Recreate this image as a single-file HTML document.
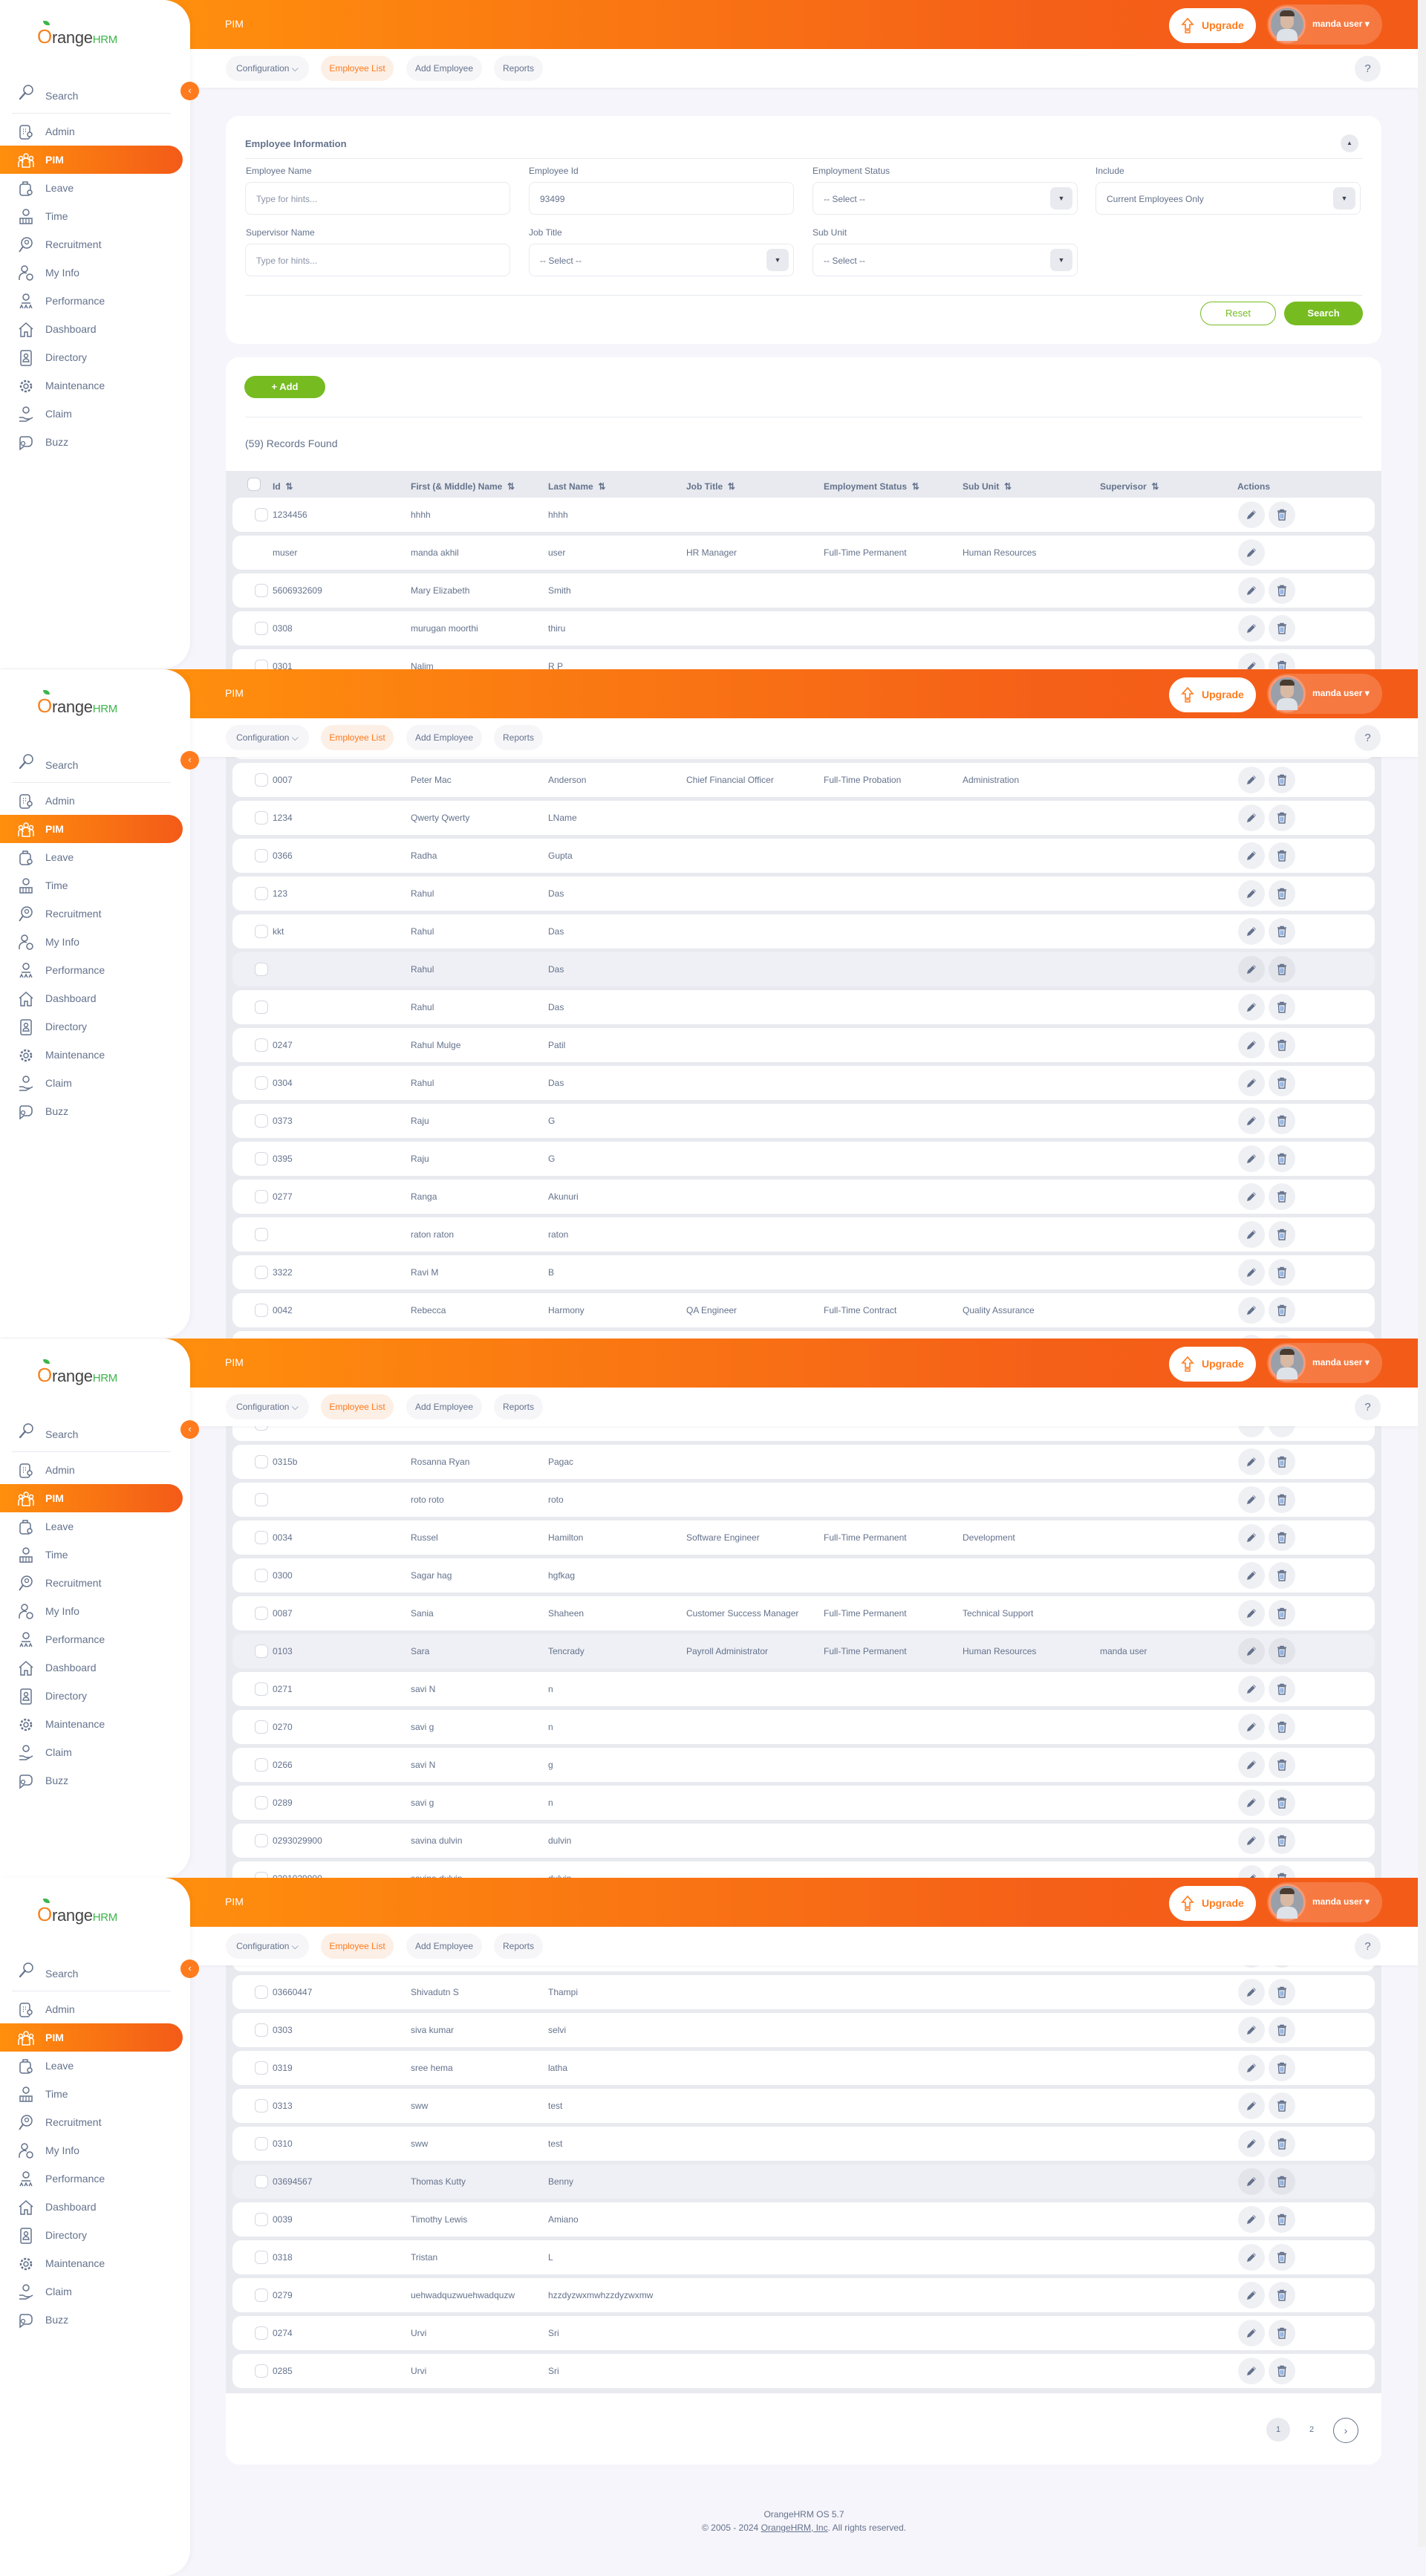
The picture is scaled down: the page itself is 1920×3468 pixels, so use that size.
<!DOCTYPE html>
<html><head><meta charset="utf-8">
<style>
*{box-sizing:border-box;margin:0;padding:0}
body{width:1920px;height:3429px;position:relative;overflow:hidden;background:#f6f5fb;font-family:"Liberation Sans",sans-serif;color:#64728c}
.abs{position:absolute}
.card{position:absolute;left:304px;width:1556px;background:#fff;border-radius:18px}
.lbl{position:absolute;font-size:12px;color:#64728c}
.inp{position:absolute;height:44px;width:357px;border:1px solid #e8eaef;border-radius:8px;font-size:12px;color:#8a93a6;padding:15px 14px;background:#fff}
.inp.dark{color:#64728c}
.car{position:absolute;right:6px;top:6px;width:30px;height:30px;background:#e8eaef;border-radius:7px;font-size:9px;text-align:center;line-height:30px;color:#3a4455}
.tgrey{position:absolute;left:304px;width:1556px;background:#e8eaef}
.row{position:absolute;left:313px;width:1538px;height:46px;background:#fff;border-radius:12px;font-size:12px;color:#64728c}
.row.hl{background:#eff0f5}
.row span{position:absolute;top:16px;white-space:nowrap}
.cb{position:absolute;left:30px;top:14px;width:18px;height:18px;border:1px solid #d5d8df;border-radius:6px;background:#fff}
.ed,.dl{position:absolute;top:5px;width:36px;height:36px;border-radius:18px;background:#eff0f4}
.row.hl .ed,.row.hl .dl{background:#e2e4ea}
.ed{left:1354px}.dl{left:1395px}
.ed svg,.dl svg{position:absolute;left:9px;top:9px}
.frame{position:absolute;left:0;width:1920px;height:0;z-index:10}
.side{position:absolute;left:0;top:0;width:256px;background:#fff;border-radius:0 36px 36px 0;box-shadow:2px 0 8px rgba(0,0,0,.04);z-index:3}
.hdr{position:absolute;left:220px;top:0;width:1689px;height:66px;background:linear-gradient(90deg,#ff8f0d,#f56018 70%,#f35b18);z-index:2}
.sub{position:absolute;left:256px;top:66px;width:1653px;height:52px;background:#fff;box-shadow:0 2px 3px rgba(0,0,0,.03);z-index:2}
.tab{position:absolute;top:9px;height:34px;border-radius:17px;background:#f6f6f9;font-size:12px;color:#64728c;line-height:34px;text-align:center}
.mi{position:absolute;left:0;width:246px;height:38px;font-size:14px;color:#64728c}
.mi svg{position:absolute;left:23px;top:8px}
.mi b{position:absolute;left:61px;top:11px;font-weight:normal}
.mi.act{background:linear-gradient(90deg,#ff8f0d,#f35b18);border-radius:0 19px 19px 0;color:#fff}
.mi.act b{font-weight:bold}
.th{position:absolute;top:648px;font-size:12px;font-weight:bold;color:#64728c;white-space:nowrap}
.scroll{position:absolute;left:1909px;top:0;width:11px;height:3429px;background:#f1f1f1;z-index:20}
.logo{position:absolute;left:50px;top:34px;font-size:22px;color:#444;letter-spacing:-0.3px}
.logo i{font-style:normal;color:#f58220;font-size:26px}
.logo em{font-style:normal;color:#3cb54a;font-size:15px}
.leaf{position:absolute;left:58px;top:28px;width:9px;height:6px;background:#3cb54a;border-radius:0 8px 0 8px}
</style></head><body>

<div class="scroll"></div>

<div class="card" style="top:156px;height:307px">
  <div class="abs" style="left:26px;top:30px;font-size:13px;font-weight:bold;color:#64728c">Employee Information</div>
  <div class="abs" style="left:1501px;top:25px;width:24px;height:24px;border-radius:12px;background:#e8eaef;font-size:8px;text-align:center;line-height:24px;color:#3a4455">▲</div>
  <div class="abs" style="left:26px;top:57px;width:1504px;height:1px;background:#e8eaef"></div>
  <div class="abs" style="left:26px;top:241px;width:1504px;height:1px;background:#e8eaef"></div>
</div>
<div class="lbl" style="left:331px;top:223px">Employee Name</div>
<div class="lbl" style="left:712px;top:223px">Employee Id</div>
<div class="lbl" style="left:1094px;top:223px">Employment Status</div>
<div class="lbl" style="left:1475px;top:223px">Include</div>
<div class="inp" style="left:330px;top:245px">Type for hints...</div>
<div class="inp dark" style="left:712px;top:245px">93499</div>
<div class="inp dark" style="left:1094px;top:245px">-- Select --<div class="car">▼</div></div>
<div class="inp dark" style="left:1475px;top:245px">Current Employees Only<div class="car">▼</div></div>
<div class="lbl" style="left:331px;top:306px">Supervisor Name</div>
<div class="lbl" style="left:712px;top:306px">Job Title</div>
<div class="lbl" style="left:1094px;top:306px">Sub Unit</div>
<div class="inp" style="left:330px;top:328px">Type for hints...</div>
<div class="inp dark" style="left:712px;top:328px">-- Select --<div class="car">▼</div></div>
<div class="inp dark" style="left:1094px;top:328px">-- Select --<div class="car">▼</div></div>
<div class="abs" style="left:1616px;top:406px;width:102px;height:32px;border:1px solid #76bc21;border-radius:16px;color:#76bc21;font-size:13px;text-align:center;line-height:30px">Reset</div>
<div class="abs" style="left:1729px;top:406px;width:106px;height:32px;background:#76bc21;border-radius:16px;color:#fff;font-size:13px;font-weight:bold;text-align:center;line-height:32px">Search</div>

<div class="card" style="top:481px;height:2837px"></div>
<div class="abs" style="left:329px;top:506px;width:109px;height:30px;background:#76bc21;border-radius:15px;color:#fff;font-size:13px;font-weight:bold;text-align:center;line-height:30px">+ Add</div>
<div class="abs" style="left:330px;top:561px;width:1504px;height:1px;background:#e8eaef"></div>
<div class="abs" style="left:330px;top:589px;font-size:14px;color:#64728c">(59) Records Found</div>
<div class="tgrey" style="top:634px;height:2588px"></div>
<div class="abs" style="left:333px;top:643px;width:18px;height:18px;border:1px solid #c9ced8;border-radius:6px;background:#fff"></div>
<div class="th" style="left:367px">Id &nbsp;⇅</div>
<div class="th" style="left:553px">First (&amp; Middle) Name &nbsp;⇅</div>
<div class="th" style="left:738px">Last Name &nbsp;⇅</div>
<div class="th" style="left:924px">Job Title &nbsp;⇅</div>
<div class="th" style="left:1109px">Employment Status &nbsp;⇅</div>
<div class="th" style="left:1296px">Sub Unit &nbsp;⇅</div>
<div class="th" style="left:1481px">Supervisor &nbsp;⇅</div>
<div class="th" style="left:1666px">Actions</div>

<svg width="0" height="0" style="position:absolute"><defs>
<symbol id="pen" viewBox="0 0 18 18"><path d="M3 15 L4 11 L12 3 L15 6 L7 14 Z" fill="#64728c"/><path d="M11 4 L14 7" stroke="#eff0f4" stroke-width="1"/></symbol>
<symbol id="bin" viewBox="0 0 18 18"><path d="M3 4 H15 M7 4 V2.5 H11 V4" stroke="#64728c" stroke-width="1.6" fill="none"/><path d="M4.5 5.5 H13.5 L12.8 16 H5.2 Z" fill="none" stroke="#64728c" stroke-width="1.5"/><path d="M7.5 7.5 V14 M9 7.5 V14 M10.5 7.5 V14" stroke="#5b8fd6" stroke-width="0.9"/></symbol>
<symbol id="i-s" viewBox="0 0 24 24"><circle cx="14" cy="9" r="6" fill="none" stroke="#64728c" stroke-width="1.5"/><path d="M10 13 L3 21" stroke="#64728c" stroke-width="2.2" stroke-linecap="round"/></symbol>
<symbol id="i-g" viewBox="0 0 24 24"><rect x="4" y="3" width="13" height="18" rx="3" fill="none" stroke="#64728c" stroke-width="1.5"/><circle cx="17" cy="15" r="3" fill="#fff" stroke="#64728c" stroke-width="1.5"/><path d="M8 8h1M11 8h1M8 11h1M11 11h1M8 14h1" stroke="#64728c" stroke-width="1.5"/></symbol>
<symbol id="i-p" viewBox="0 0 24 24"><circle cx="12" cy="6" r="3" fill="none" stroke="#fff" stroke-width="1.5"/><circle cx="5" cy="9" r="2.5" fill="none" stroke="#fff" stroke-width="1.5"/><circle cx="19" cy="9" r="2.5" fill="none" stroke="#fff" stroke-width="1.5"/><path d="M2 21v-6a3 3 0 0 1 6 0M16 15a3 3 0 0 1 6 0v6M7 21v-7a5 5 0 0 1 10 0v7z" fill="none" stroke="#fff" stroke-width="1.5"/></symbol>
<symbol id="i-x" viewBox="0 0 24 24"><rect x="4" y="6" width="14" height="15" rx="3" fill="none" stroke="#64728c" stroke-width="1.5"/><path d="M8 6V3h6v3" fill="none" stroke="#64728c" stroke-width="1.5"/><circle cx="17" cy="17" r="3" fill="#fff" stroke="#64728c" stroke-width="1.5"/></symbol>
<symbol id="i-t" viewBox="0 0 24 24"><circle cx="12" cy="6" r="4" fill="none" stroke="#64728c" stroke-width="1.5"/><rect x="4" y="14" width="16" height="7" fill="none" stroke="#64728c" stroke-width="1.5"/><path d="M8 14v7M12 14v7M16 14v7" stroke="#64728c" stroke-width="1.2"/></symbol>
<symbol id="i-r" viewBox="0 0 24 24"><circle cx="13" cy="9" r="7" fill="none" stroke="#64728c" stroke-width="1.5"/><circle cx="13" cy="8" r="2.5" fill="none" stroke="#64728c" stroke-width="1.3"/><path d="M8 14L3 21" stroke="#64728c" stroke-width="1.8"/></symbol>
<symbol id="i-m" viewBox="0 0 24 24"><circle cx="10" cy="6" r="4" fill="none" stroke="#64728c" stroke-width="1.5"/><path d="M3 21v-3a7 7 0 0 1 10-6" fill="none" stroke="#64728c" stroke-width="1.5"/><circle cx="17" cy="17" r="4" fill="none" stroke="#64728c" stroke-width="1.5"/></symbol>
<symbol id="i-f" viewBox="0 0 24 24"><circle cx="12" cy="6" r="4" fill="none" stroke="#64728c" stroke-width="1.5"/><path d="M6 14h12M4 21l2-4 2 4M10 21l2-4 2 4M16 21l2-4 2 4" fill="none" stroke="#64728c" stroke-width="1.4"/></symbol>
<symbol id="i-d" viewBox="0 0 24 24"><path d="M3 11L12 3l9 8M5 10v11h5v-6h4v6h5V10" fill="none" stroke="#64728c" stroke-width="1.5"/></symbol>
<symbol id="i-y" viewBox="0 0 24 24"><rect x="5" y="2" width="14" height="20" rx="2" fill="none" stroke="#64728c" stroke-width="1.5"/><circle cx="12" cy="9" r="2.5" fill="none" stroke="#64728c" stroke-width="1.4"/><path d="M8 17a4 4 0 0 1 8 0z" fill="none" stroke="#64728c" stroke-width="1.4"/></symbol>
<symbol id="i-n" viewBox="0 0 24 24"><circle cx="12" cy="12" r="7" fill="none" stroke="#64728c" stroke-width="2.5" stroke-dasharray="3 2"/><circle cx="12" cy="12" r="3" fill="none" stroke="#64728c" stroke-width="1.5"/></symbol>
<symbol id="i-c" viewBox="0 0 24 24"><circle cx="12" cy="6" r="4" fill="none" stroke="#64728c" stroke-width="1.5"/><path d="M3 16h5l4 2h6M3 21h9l9-5" fill="none" stroke="#64728c" stroke-width="1.5"/></symbol>
<symbol id="i-b" viewBox="0 0 24 24"><path d="M6 4h9a5 5 0 0 1 5 5v3a5 5 0 0 1-5 5H9l-5 4V7a3 3 0 0 1 2-3z" fill="none" stroke="#64728c" stroke-width="1.5"/><circle cx="8" cy="13" r="2.5" fill="none" stroke="#64728c" stroke-width="1.3"/></symbol>
<symbol id="up" viewBox="0 0 18 24"><path d="M9 2L2 10h4v6h6v-6h4z" fill="none" stroke="#ff7b1d" stroke-width="1.6"/><rect x="6" y="18" width="6" height="3" fill="none" stroke="#ff7b1d" stroke-width="1.4"/></symbol>
</defs></svg>

<div class="row" style="top:670px"><i class="cb"></i><span style="left:54px">1234456</span><span style="left:240px">hhhh</span><span style="left:425px">hhhh</span><i class="ed"><svg width="18" height="18"><use href="#pen"/></svg></i><i class="dl"><svg width="18" height="18"><use href="#bin"/></svg></i></div>
<div class="row" style="top:721px"><span style="left:54px">muser</span><span style="left:240px">manda akhil</span><span style="left:425px">user</span><span style="left:611px">HR Manager</span><span style="left:796px">Full-Time Permanent</span><span style="left:983px">Human Resources</span><i class="ed"><svg width="18" height="18"><use href="#pen"/></svg></i></div>
<div class="row" style="top:772px"><i class="cb"></i><span style="left:54px">5606932609</span><span style="left:240px">Mary Elizabeth</span><span style="left:425px">Smith</span><i class="ed"><svg width="18" height="18"><use href="#pen"/></svg></i><i class="dl"><svg width="18" height="18"><use href="#bin"/></svg></i></div>
<div class="row" style="top:823px"><i class="cb"></i><span style="left:54px">0308</span><span style="left:240px">murugan moorthi</span><span style="left:425px">thiru</span><i class="ed"><svg width="18" height="18"><use href="#pen"/></svg></i><i class="dl"><svg width="18" height="18"><use href="#bin"/></svg></i></div>
<div class="row" style="top:874px"><i class="cb"></i><span style="left:54px">0301</span><span style="left:240px">Nalim</span><span style="left:425px">R P</span><i class="ed"><svg width="18" height="18"><use href="#pen"/></svg></i><i class="dl"><svg width="18" height="18"><use href="#bin"/></svg></i></div>

<div class="row" style="top:976px"><i class="cb"></i></div>
<div class="row" style="top:1027px"><i class="cb"></i><span style="left:54px">0007</span><span style="left:240px">Peter Mac</span><span style="left:425px">Anderson</span><span style="left:611px">Chief Financial Officer</span><span style="left:796px">Full-Time Probation</span><span style="left:983px">Administration</span><i class="ed"><svg width="18" height="18"><use href="#pen"/></svg></i><i class="dl"><svg width="18" height="18"><use href="#bin"/></svg></i></div>
<div class="row" style="top:1078px"><i class="cb"></i><span style="left:54px">1234</span><span style="left:240px">Qwerty Qwerty</span><span style="left:425px">LName</span><i class="ed"><svg width="18" height="18"><use href="#pen"/></svg></i><i class="dl"><svg width="18" height="18"><use href="#bin"/></svg></i></div>
<div class="row" style="top:1129px"><i class="cb"></i><span style="left:54px">0366</span><span style="left:240px">Radha</span><span style="left:425px">Gupta</span><i class="ed"><svg width="18" height="18"><use href="#pen"/></svg></i><i class="dl"><svg width="18" height="18"><use href="#bin"/></svg></i></div>
<div class="row" style="top:1180px"><i class="cb"></i><span style="left:54px">123</span><span style="left:240px">Rahul</span><span style="left:425px">Das</span><i class="ed"><svg width="18" height="18"><use href="#pen"/></svg></i><i class="dl"><svg width="18" height="18"><use href="#bin"/></svg></i></div>
<div class="row" style="top:1231px"><i class="cb"></i><span style="left:54px">kkt</span><span style="left:240px">Rahul</span><span style="left:425px">Das</span><i class="ed"><svg width="18" height="18"><use href="#pen"/></svg></i><i class="dl"><svg width="18" height="18"><use href="#bin"/></svg></i></div>
<div class="row hl" style="top:1282px"><i class="cb"></i><span style="left:240px">Rahul</span><span style="left:425px">Das</span><i class="ed"><svg width="18" height="18"><use href="#pen"/></svg></i><i class="dl"><svg width="18" height="18"><use href="#bin"/></svg></i></div>
<div class="row" style="top:1333px"><i class="cb"></i><span style="left:240px">Rahul</span><span style="left:425px">Das</span><i class="ed"><svg width="18" height="18"><use href="#pen"/></svg></i><i class="dl"><svg width="18" height="18"><use href="#bin"/></svg></i></div>
<div class="row" style="top:1384px"><i class="cb"></i><span style="left:54px">0247</span><span style="left:240px">Rahul Mulge</span><span style="left:425px">Patil</span><i class="ed"><svg width="18" height="18"><use href="#pen"/></svg></i><i class="dl"><svg width="18" height="18"><use href="#bin"/></svg></i></div>
<div class="row" style="top:1435px"><i class="cb"></i><span style="left:54px">0304</span><span style="left:240px">Rahul</span><span style="left:425px">Das</span><i class="ed"><svg width="18" height="18"><use href="#pen"/></svg></i><i class="dl"><svg width="18" height="18"><use href="#bin"/></svg></i></div>
<div class="row" style="top:1486px"><i class="cb"></i><span style="left:54px">0373</span><span style="left:240px">Raju</span><span style="left:425px">G</span><i class="ed"><svg width="18" height="18"><use href="#pen"/></svg></i><i class="dl"><svg width="18" height="18"><use href="#bin"/></svg></i></div>
<div class="row" style="top:1537px"><i class="cb"></i><span style="left:54px">0395</span><span style="left:240px">Raju</span><span style="left:425px">G</span><i class="ed"><svg width="18" height="18"><use href="#pen"/></svg></i><i class="dl"><svg width="18" height="18"><use href="#bin"/></svg></i></div>
<div class="row" style="top:1588px"><i class="cb"></i><span style="left:54px">0277</span><span style="left:240px">Ranga</span><span style="left:425px">Akunuri</span><i class="ed"><svg width="18" height="18"><use href="#pen"/></svg></i><i class="dl"><svg width="18" height="18"><use href="#bin"/></svg></i></div>
<div class="row" style="top:1639px"><i class="cb"></i><span style="left:240px">raton raton</span><span style="left:425px">raton</span><i class="ed"><svg width="18" height="18"><use href="#pen"/></svg></i><i class="dl"><svg width="18" height="18"><use href="#bin"/></svg></i></div>
<div class="row" style="top:1690px"><i class="cb"></i><span style="left:54px">3322</span><span style="left:240px">Ravi M</span><span style="left:425px">B</span><i class="ed"><svg width="18" height="18"><use href="#pen"/></svg></i><i class="dl"><svg width="18" height="18"><use href="#bin"/></svg></i></div>
<div class="row" style="top:1741px"><i class="cb"></i><span style="left:54px">0042</span><span style="left:240px">Rebecca</span><span style="left:425px">Harmony</span><span style="left:611px">QA Engineer</span><span style="left:796px">Full-Time Contract</span><span style="left:983px">Quality Assurance</span><i class="ed"><svg width="18" height="18"><use href="#pen"/></svg></i><i class="dl"><svg width="18" height="18"><use href="#bin"/></svg></i></div>
<div class="row" style="top:1792px"><i class="cb"></i><i class="ed"></i><i class="dl"></i></div>

<div class="row" style="top:1894px"><i class="cb"></i><i class="ed"></i><i class="dl"></i></div>
<div class="row" style="top:1945px"><i class="cb"></i><span style="left:54px">0315b</span><span style="left:240px">Rosanna Ryan</span><span style="left:425px">Pagac</span><i class="ed"><svg width="18" height="18"><use href="#pen"/></svg></i><i class="dl"><svg width="18" height="18"><use href="#bin"/></svg></i></div>
<div class="row" style="top:1996px"><i class="cb"></i><span style="left:240px">roto roto</span><span style="left:425px">roto</span><i class="ed"><svg width="18" height="18"><use href="#pen"/></svg></i><i class="dl"><svg width="18" height="18"><use href="#bin"/></svg></i></div>
<div class="row" style="top:2047px"><i class="cb"></i><span style="left:54px">0034</span><span style="left:240px">Russel</span><span style="left:425px">Hamilton</span><span style="left:611px">Software Engineer</span><span style="left:796px">Full-Time Permanent</span><span style="left:983px">Development</span><i class="ed"><svg width="18" height="18"><use href="#pen"/></svg></i><i class="dl"><svg width="18" height="18"><use href="#bin"/></svg></i></div>
<div class="row" style="top:2098px"><i class="cb"></i><span style="left:54px">0300</span><span style="left:240px">Sagar hag</span><span style="left:425px">hgfkag</span><i class="ed"><svg width="18" height="18"><use href="#pen"/></svg></i><i class="dl"><svg width="18" height="18"><use href="#bin"/></svg></i></div>
<div class="row" style="top:2149px"><i class="cb"></i><span style="left:54px">0087</span><span style="left:240px">Sania</span><span style="left:425px">Shaheen</span><span style="left:611px">Customer Success Manager</span><span style="left:796px">Full-Time Permanent</span><span style="left:983px">Technical Support</span><i class="ed"><svg width="18" height="18"><use href="#pen"/></svg></i><i class="dl"><svg width="18" height="18"><use href="#bin"/></svg></i></div>
<div class="row hl" style="top:2200px"><i class="cb"></i><span style="left:54px">0103</span><span style="left:240px">Sara</span><span style="left:425px">Tencrady</span><span style="left:611px">Payroll Administrator</span><span style="left:796px">Full-Time Permanent</span><span style="left:983px">Human Resources</span><span style="left:1168px">manda user</span><i class="ed"><svg width="18" height="18"><use href="#pen"/></svg></i><i class="dl"><svg width="18" height="18"><use href="#bin"/></svg></i></div>
<div class="row" style="top:2251px"><i class="cb"></i><span style="left:54px">0271</span><span style="left:240px">savi N</span><span style="left:425px">n</span><i class="ed"><svg width="18" height="18"><use href="#pen"/></svg></i><i class="dl"><svg width="18" height="18"><use href="#bin"/></svg></i></div>
<div class="row" style="top:2302px"><i class="cb"></i><span style="left:54px">0270</span><span style="left:240px">savi g</span><span style="left:425px">n</span><i class="ed"><svg width="18" height="18"><use href="#pen"/></svg></i><i class="dl"><svg width="18" height="18"><use href="#bin"/></svg></i></div>
<div class="row" style="top:2353px"><i class="cb"></i><span style="left:54px">0266</span><span style="left:240px">savi N</span><span style="left:425px">g</span><i class="ed"><svg width="18" height="18"><use href="#pen"/></svg></i><i class="dl"><svg width="18" height="18"><use href="#bin"/></svg></i></div>
<div class="row" style="top:2404px"><i class="cb"></i><span style="left:54px">0289</span><span style="left:240px">savi g</span><span style="left:425px">n</span><i class="ed"><svg width="18" height="18"><use href="#pen"/></svg></i><i class="dl"><svg width="18" height="18"><use href="#bin"/></svg></i></div>
<div class="row" style="top:2455px"><i class="cb"></i><span style="left:54px">0293029900</span><span style="left:240px">savina dulvin</span><span style="left:425px">dulvin</span><i class="ed"><svg width="18" height="18"><use href="#pen"/></svg></i><i class="dl"><svg width="18" height="18"><use href="#bin"/></svg></i></div>
<div class="row" style="top:2506px"><i class="cb"></i><span style="left:54px">0291029900</span><span style="left:240px">savina dulvin</span><span style="left:425px">dulvin</span><i class="ed"><svg width="18" height="18"><use href="#pen"/></svg></i><i class="dl"><svg width="18" height="18"><use href="#bin"/></svg></i></div>

<div class="row" style="top:2608px"><i class="cb"></i><i class="ed"></i><i class="dl"></i></div>
<div class="row" style="top:2659px"><i class="cb"></i><span style="left:54px">03660447</span><span style="left:240px">Shivadutn S</span><span style="left:425px">Thampi</span><i class="ed"><svg width="18" height="18"><use href="#pen"/></svg></i><i class="dl"><svg width="18" height="18"><use href="#bin"/></svg></i></div>
<div class="row" style="top:2710px"><i class="cb"></i><span style="left:54px">0303</span><span style="left:240px">siva kumar</span><span style="left:425px">selvi</span><i class="ed"><svg width="18" height="18"><use href="#pen"/></svg></i><i class="dl"><svg width="18" height="18"><use href="#bin"/></svg></i></div>
<div class="row" style="top:2761px"><i class="cb"></i><span style="left:54px">0319</span><span style="left:240px">sree hema</span><span style="left:425px">latha</span><i class="ed"><svg width="18" height="18"><use href="#pen"/></svg></i><i class="dl"><svg width="18" height="18"><use href="#bin"/></svg></i></div>
<div class="row" style="top:2812px"><i class="cb"></i><span style="left:54px">0313</span><span style="left:240px">sww</span><span style="left:425px">test</span><i class="ed"><svg width="18" height="18"><use href="#pen"/></svg></i><i class="dl"><svg width="18" height="18"><use href="#bin"/></svg></i></div>
<div class="row" style="top:2863px"><i class="cb"></i><span style="left:54px">0310</span><span style="left:240px">sww</span><span style="left:425px">test</span><i class="ed"><svg width="18" height="18"><use href="#pen"/></svg></i><i class="dl"><svg width="18" height="18"><use href="#bin"/></svg></i></div>
<div class="row hl" style="top:2914px"><i class="cb"></i><span style="left:54px">03694567</span><span style="left:240px">Thomas Kutty</span><span style="left:425px">Benny</span><i class="ed"><svg width="18" height="18"><use href="#pen"/></svg></i><i class="dl"><svg width="18" height="18"><use href="#bin"/></svg></i></div>
<div class="row" style="top:2965px"><i class="cb"></i><span style="left:54px">0039</span><span style="left:240px">Timothy Lewis</span><span style="left:425px">Amiano</span><i class="ed"><svg width="18" height="18"><use href="#pen"/></svg></i><i class="dl"><svg width="18" height="18"><use href="#bin"/></svg></i></div>
<div class="row" style="top:3016px"><i class="cb"></i><span style="left:54px">0318</span><span style="left:240px">Tristan</span><span style="left:425px">L</span><i class="ed"><svg width="18" height="18"><use href="#pen"/></svg></i><i class="dl"><svg width="18" height="18"><use href="#bin"/></svg></i></div>
<div class="row" style="top:3067px"><i class="cb"></i><span style="left:54px">0279</span><span style="left:240px">uehwadquzwuehwadquzw</span><span style="left:425px">hzzdyzwxmwhzzdyzwxmw</span><i class="ed"><svg width="18" height="18"><use href="#pen"/></svg></i><i class="dl"><svg width="18" height="18"><use href="#bin"/></svg></i></div>
<div class="row" style="top:3118px"><i class="cb"></i><span style="left:54px">0274</span><span style="left:240px">Urvi</span><span style="left:425px">Sri</span><i class="ed"><svg width="18" height="18"><use href="#pen"/></svg></i><i class="dl"><svg width="18" height="18"><use href="#bin"/></svg></i></div>
<div class="row" style="top:3169px"><i class="cb"></i><span style="left:54px">0285</span><span style="left:240px">Urvi</span><span style="left:425px">Sri</span><i class="ed"><svg width="18" height="18"><use href="#pen"/></svg></i><i class="dl"><svg width="18" height="18"><use href="#bin"/></svg></i></div>

<div class="abs" style="left:1705px;top:3255px;width:32px;height:32px;border-radius:16px;background:#e8eaef;font-size:11px;text-align:center;line-height:32px">1</div>
<div class="abs" style="left:1750px;top:3255px;width:32px;height:32px;font-size:11px;text-align:center;line-height:32px">2</div>
<div class="abs" style="left:1795px;top:3255px;width:34px;height:34px;border-radius:17px;border:1px solid #64728c;font-size:14px;text-align:center;line-height:32px">›</div>

<div class="abs" style="left:256px;width:1653px;top:3376px;text-align:center;font-size:12px;line-height:18px;color:#64728c">OrangeHRM OS 5.7<br>© 2005 - 2024 <u>OrangeHRM, Inc</u>. All rights reserved.</div>

<!-- FRAME 1 -->
<div class="frame" style="top:0px">
 <div class="side" style="height:900px">
  <div class="leaf"></div><div class="logo"><i>O</i>range<em>HRM</em></div>
  <svg class="abs" style="left:24px;top:112px" width="24" height="24"><use href="#i-s"/></svg>
  <div class="abs" style="left:61px;top:121px;font-size:14px">Search</div>
  <div class="abs" style="left:16px;top:152px;width:214px;height:1px;background:#e8eaef"></div>
  <div class="mi" style="top:158px"><svg width="24" height="24"><use href="#i-g"/></svg><b>Admin</b></div>
  <div class="mi act" style="top:196px"><svg width="24" height="24"><use href="#i-p"/></svg><b>PIM</b></div>
  <div class="mi" style="top:234px"><svg width="24" height="24"><use href="#i-x"/></svg><b>Leave</b></div>
  <div class="mi" style="top:272px"><svg width="24" height="24"><use href="#i-t"/></svg><b>Time</b></div>
  <div class="mi" style="top:310px"><svg width="24" height="24"><use href="#i-r"/></svg><b>Recruitment</b></div>
  <div class="mi" style="top:348px"><svg width="24" height="24"><use href="#i-m"/></svg><b>My Info</b></div>
  <div class="mi" style="top:386px"><svg width="24" height="24"><use href="#i-f"/></svg><b>Performance</b></div>
  <div class="mi" style="top:424px"><svg width="24" height="24"><use href="#i-d"/></svg><b>Dashboard</b></div>
  <div class="mi" style="top:462px"><svg width="24" height="24"><use href="#i-y"/></svg><b>Directory</b></div>
  <div class="mi" style="top:500px"><svg width="24" height="24"><use href="#i-n"/></svg><b>Maintenance</b></div>
  <div class="mi" style="top:538px"><svg width="24" height="24"><use href="#i-c"/></svg><b>Claim</b></div>
  <div class="mi" style="top:576px"><svg width="24" height="24"><use href="#i-b"/></svg><b>Buzz</b></div>
 </div>
 <div class="abs" style="left:243px;top:110px;width:25px;height:25px;border-radius:13px;background:#ff7b1d;color:#fff;font-size:13px;text-align:center;line-height:24px;z-index:4">‹</div>
 <div class="hdr"><div class="abs" style="left:83px;top:24px;color:#fff;font-size:14px">PIM</div>
  <div class="abs" style="left:1354px;top:11px;width:117px;height:47px;background:#fff;border-radius:24px;color:#ff7b1d;font-weight:bold;font-size:14px;line-height:47px;padding-left:44px"><svg class="abs" style="left:16px;top:12px" width="18" height="24"><use href="#up"/></svg>Upgrade</div>
  <div class="abs" style="left:1486px;top:6px;width:155px;height:54px;background:rgba(255,255,255,.18);border-radius:27px"><div class="abs" style="left:2px;top:2px;width:50px;height:50px;border-radius:25px;background:#9aa0aa;border:3px solid #f49a78"><div class="abs" style="left:13px;top:6px;width:18px;height:22px;border-radius:9px;background:#d8b9a4"></div><div class="abs" style="left:8px;top:28px;width:28px;height:16px;border-radius:10px 10px 0 0;background:#dde2e8"></div><div class="abs" style="left:12px;top:3px;width:20px;height:8px;border-radius:8px 8px 2px 2px;background:#4a3b30"></div></div><div class="abs" style="left:61px;top:19px;color:#fff;font-size:12px;font-weight:bold">manda user ▾</div></div>
 </div>
 <div class="sub">
  <div class="tab" style="left:48px;width:112px">Configuration ⌵</div>
  <div class="tab" style="left:176px;width:98px;background:#fcefe6;color:#ff7b1d">Employee List</div>
  <div class="tab" style="left:291px;width:102px">Add Employee</div>
  <div class="tab" style="left:409px;width:66px">Reports</div>
  <div class="abs" style="left:1568px;top:9px;width:35px;height:35px;border-radius:18px;background:#eff0f4;font-size:15px;text-align:center;line-height:35px">?</div>
 </div>
</div>

<!-- FRAME 2 -->
<div class="frame" style="top:901px">
 <div class="side" style="height:900px">
  <div class="leaf"></div><div class="logo"><i>O</i>range<em>HRM</em></div>
  <svg class="abs" style="left:24px;top:112px" width="24" height="24"><use href="#i-s"/></svg>
  <div class="abs" style="left:61px;top:121px;font-size:14px">Search</div>
  <div class="abs" style="left:16px;top:152px;width:214px;height:1px;background:#e8eaef"></div>
  <div class="mi" style="top:158px"><svg width="24" height="24"><use href="#i-g"/></svg><b>Admin</b></div>
  <div class="mi act" style="top:196px"><svg width="24" height="24"><use href="#i-p"/></svg><b>PIM</b></div>
  <div class="mi" style="top:234px"><svg width="24" height="24"><use href="#i-x"/></svg><b>Leave</b></div>
  <div class="mi" style="top:272px"><svg width="24" height="24"><use href="#i-t"/></svg><b>Time</b></div>
  <div class="mi" style="top:310px"><svg width="24" height="24"><use href="#i-r"/></svg><b>Recruitment</b></div>
  <div class="mi" style="top:348px"><svg width="24" height="24"><use href="#i-m"/></svg><b>My Info</b></div>
  <div class="mi" style="top:386px"><svg width="24" height="24"><use href="#i-f"/></svg><b>Performance</b></div>
  <div class="mi" style="top:424px"><svg width="24" height="24"><use href="#i-d"/></svg><b>Dashboard</b></div>
  <div class="mi" style="top:462px"><svg width="24" height="24"><use href="#i-y"/></svg><b>Directory</b></div>
  <div class="mi" style="top:500px"><svg width="24" height="24"><use href="#i-n"/></svg><b>Maintenance</b></div>
  <div class="mi" style="top:538px"><svg width="24" height="24"><use href="#i-c"/></svg><b>Claim</b></div>
  <div class="mi" style="top:576px"><svg width="24" height="24"><use href="#i-b"/></svg><b>Buzz</b></div>
 </div>
 <div class="abs" style="left:243px;top:110px;width:25px;height:25px;border-radius:13px;background:#ff7b1d;color:#fff;font-size:13px;text-align:center;line-height:24px;z-index:4">‹</div>
 <div class="hdr"><div class="abs" style="left:83px;top:24px;color:#fff;font-size:14px">PIM</div>
  <div class="abs" style="left:1354px;top:11px;width:117px;height:47px;background:#fff;border-radius:24px;color:#ff7b1d;font-weight:bold;font-size:14px;line-height:47px;padding-left:44px"><svg class="abs" style="left:16px;top:12px" width="18" height="24"><use href="#up"/></svg>Upgrade</div>
  <div class="abs" style="left:1486px;top:6px;width:155px;height:54px;background:rgba(255,255,255,.18);border-radius:27px"><div class="abs" style="left:2px;top:2px;width:50px;height:50px;border-radius:25px;background:#9aa0aa;border:3px solid #f49a78"><div class="abs" style="left:13px;top:6px;width:18px;height:22px;border-radius:9px;background:#d8b9a4"></div><div class="abs" style="left:8px;top:28px;width:28px;height:16px;border-radius:10px 10px 0 0;background:#dde2e8"></div><div class="abs" style="left:12px;top:3px;width:20px;height:8px;border-radius:8px 8px 2px 2px;background:#4a3b30"></div></div><div class="abs" style="left:61px;top:19px;color:#fff;font-size:12px;font-weight:bold">manda user ▾</div></div>
 </div>
 <div class="sub">
  <div class="tab" style="left:48px;width:112px">Configuration ⌵</div>
  <div class="tab" style="left:176px;width:98px;background:#fcefe6;color:#ff7b1d">Employee List</div>
  <div class="tab" style="left:291px;width:102px">Add Employee</div>
  <div class="tab" style="left:409px;width:66px">Reports</div>
  <div class="abs" style="left:1568px;top:9px;width:35px;height:35px;border-radius:18px;background:#eff0f4;font-size:15px;text-align:center;line-height:35px">?</div>
 </div>
</div>

<!-- FRAME 3 -->
<div class="frame" style="top:1802px">
 <div class="side" style="height:726px">
  <div class="leaf"></div><div class="logo"><i>O</i>range<em>HRM</em></div>
  <svg class="abs" style="left:24px;top:112px" width="24" height="24"><use href="#i-s"/></svg>
  <div class="abs" style="left:61px;top:121px;font-size:14px">Search</div>
  <div class="abs" style="left:16px;top:152px;width:214px;height:1px;background:#e8eaef"></div>
  <div class="mi" style="top:158px"><svg width="24" height="24"><use href="#i-g"/></svg><b>Admin</b></div>
  <div class="mi act" style="top:196px"><svg width="24" height="24"><use href="#i-p"/></svg><b>PIM</b></div>
  <div class="mi" style="top:234px"><svg width="24" height="24"><use href="#i-x"/></svg><b>Leave</b></div>
  <div class="mi" style="top:272px"><svg width="24" height="24"><use href="#i-t"/></svg><b>Time</b></div>
  <div class="mi" style="top:310px"><svg width="24" height="24"><use href="#i-r"/></svg><b>Recruitment</b></div>
  <div class="mi" style="top:348px"><svg width="24" height="24"><use href="#i-m"/></svg><b>My Info</b></div>
  <div class="mi" style="top:386px"><svg width="24" height="24"><use href="#i-f"/></svg><b>Performance</b></div>
  <div class="mi" style="top:424px"><svg width="24" height="24"><use href="#i-d"/></svg><b>Dashboard</b></div>
  <div class="mi" style="top:462px"><svg width="24" height="24"><use href="#i-y"/></svg><b>Directory</b></div>
  <div class="mi" style="top:500px"><svg width="24" height="24"><use href="#i-n"/></svg><b>Maintenance</b></div>
  <div class="mi" style="top:538px"><svg width="24" height="24"><use href="#i-c"/></svg><b>Claim</b></div>
  <div class="mi" style="top:576px"><svg width="24" height="24"><use href="#i-b"/></svg><b>Buzz</b></div>
 </div>
 <div class="abs" style="left:243px;top:110px;width:25px;height:25px;border-radius:13px;background:#ff7b1d;color:#fff;font-size:13px;text-align:center;line-height:24px;z-index:4">‹</div>
 <div class="hdr"><div class="abs" style="left:83px;top:24px;color:#fff;font-size:14px">PIM</div>
  <div class="abs" style="left:1354px;top:11px;width:117px;height:47px;background:#fff;border-radius:24px;color:#ff7b1d;font-weight:bold;font-size:14px;line-height:47px;padding-left:44px"><svg class="abs" style="left:16px;top:12px" width="18" height="24"><use href="#up"/></svg>Upgrade</div>
  <div class="abs" style="left:1486px;top:6px;width:155px;height:54px;background:rgba(255,255,255,.18);border-radius:27px"><div class="abs" style="left:2px;top:2px;width:50px;height:50px;border-radius:25px;background:#9aa0aa;border:3px solid #f49a78"><div class="abs" style="left:13px;top:6px;width:18px;height:22px;border-radius:9px;background:#d8b9a4"></div><div class="abs" style="left:8px;top:28px;width:28px;height:16px;border-radius:10px 10px 0 0;background:#dde2e8"></div><div class="abs" style="left:12px;top:3px;width:20px;height:8px;border-radius:8px 8px 2px 2px;background:#4a3b30"></div></div><div class="abs" style="left:61px;top:19px;color:#fff;font-size:12px;font-weight:bold">manda user ▾</div></div>
 </div>
 <div class="sub">
  <div class="tab" style="left:48px;width:112px">Configuration ⌵</div>
  <div class="tab" style="left:176px;width:98px;background:#fcefe6;color:#ff7b1d">Employee List</div>
  <div class="tab" style="left:291px;width:102px">Add Employee</div>
  <div class="tab" style="left:409px;width:66px">Reports</div>
  <div class="abs" style="left:1568px;top:9px;width:35px;height:35px;border-radius:18px;background:#eff0f4;font-size:15px;text-align:center;line-height:35px">?</div>
 </div>
</div>

<!-- FRAME 4 -->
<div class="frame" style="top:2528px">
 <div class="side" style="height:940px">
  <div class="leaf"></div><div class="logo"><i>O</i>range<em>HRM</em></div>
  <svg class="abs" style="left:24px;top:112px" width="24" height="24"><use href="#i-s"/></svg>
  <div class="abs" style="left:61px;top:121px;font-size:14px">Search</div>
  <div class="abs" style="left:16px;top:152px;width:214px;height:1px;background:#e8eaef"></div>
  <div class="mi" style="top:158px"><svg width="24" height="24"><use href="#i-g"/></svg><b>Admin</b></div>
  <div class="mi act" style="top:196px"><svg width="24" height="24"><use href="#i-p"/></svg><b>PIM</b></div>
  <div class="mi" style="top:234px"><svg width="24" height="24"><use href="#i-x"/></svg><b>Leave</b></div>
  <div class="mi" style="top:272px"><svg width="24" height="24"><use href="#i-t"/></svg><b>Time</b></div>
  <div class="mi" style="top:310px"><svg width="24" height="24"><use href="#i-r"/></svg><b>Recruitment</b></div>
  <div class="mi" style="top:348px"><svg width="24" height="24"><use href="#i-m"/></svg><b>My Info</b></div>
  <div class="mi" style="top:386px"><svg width="24" height="24"><use href="#i-f"/></svg><b>Performance</b></div>
  <div class="mi" style="top:424px"><svg width="24" height="24"><use href="#i-d"/></svg><b>Dashboard</b></div>
  <div class="mi" style="top:462px"><svg width="24" height="24"><use href="#i-y"/></svg><b>Directory</b></div>
  <div class="mi" style="top:500px"><svg width="24" height="24"><use href="#i-n"/></svg><b>Maintenance</b></div>
  <div class="mi" style="top:538px"><svg width="24" height="24"><use href="#i-c"/></svg><b>Claim</b></div>
  <div class="mi" style="top:576px"><svg width="24" height="24"><use href="#i-b"/></svg><b>Buzz</b></div>
 </div>
 <div class="abs" style="left:243px;top:110px;width:25px;height:25px;border-radius:13px;background:#ff7b1d;color:#fff;font-size:13px;text-align:center;line-height:24px;z-index:4">‹</div>
 <div class="hdr"><div class="abs" style="left:83px;top:24px;color:#fff;font-size:14px">PIM</div>
  <div class="abs" style="left:1354px;top:11px;width:117px;height:47px;background:#fff;border-radius:24px;color:#ff7b1d;font-weight:bold;font-size:14px;line-height:47px;padding-left:44px"><svg class="abs" style="left:16px;top:12px" width="18" height="24"><use href="#up"/></svg>Upgrade</div>
  <div class="abs" style="left:1486px;top:6px;width:155px;height:54px;background:rgba(255,255,255,.18);border-radius:27px"><div class="abs" style="left:2px;top:2px;width:50px;height:50px;border-radius:25px;background:#9aa0aa;border:3px solid #f49a78"><div class="abs" style="left:13px;top:6px;width:18px;height:22px;border-radius:9px;background:#d8b9a4"></div><div class="abs" style="left:8px;top:28px;width:28px;height:16px;border-radius:10px 10px 0 0;background:#dde2e8"></div><div class="abs" style="left:12px;top:3px;width:20px;height:8px;border-radius:8px 8px 2px 2px;background:#4a3b30"></div></div><div class="abs" style="left:61px;top:19px;color:#fff;font-size:12px;font-weight:bold">manda user ▾</div></div>
 </div>
 <div class="sub">
  <div class="tab" style="left:48px;width:112px">Configuration ⌵</div>
  <div class="tab" style="left:176px;width:98px;background:#fcefe6;color:#ff7b1d">Employee List</div>
  <div class="tab" style="left:291px;width:102px">Add Employee</div>
  <div class="tab" style="left:409px;width:66px">Reports</div>
  <div class="abs" style="left:1568px;top:9px;width:35px;height:35px;border-radius:18px;background:#eff0f4;font-size:15px;text-align:center;line-height:35px">?</div>
 </div>
</div>
</body></html>
